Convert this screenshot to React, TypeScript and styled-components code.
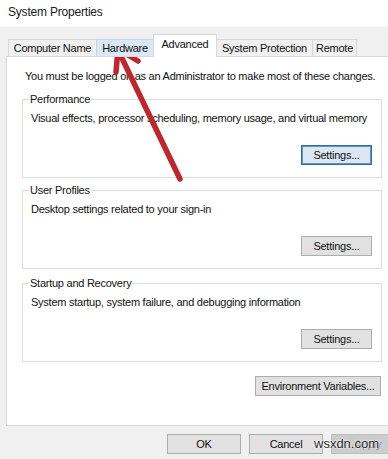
import React from "react";
import styled, {createGlobalStyle} from "styled-components";

const GlobalStyle = createGlobalStyle`
    html, body {
        margin: 0;
        padding: 0;
        background: #f0f0f0;
    }

    body {
        font-family: "Liberation Sans", Arial, sans-serif;
        color: #111;
    }
`;

type TabKind = "normal" | "hover" | "active";

const tabs: { label: string; width: number; kind: TabKind }[] = [
    {label: "Computer Name", width: 89, kind: "normal"},
    {label: "Hardware", width: 58, kind: "hover"},
    {label: "Advanced", width: 64, kind: "active"},
    {label: "System Protection", width: 97, kind: "normal"},
    {label: "Remote", width: 45, kind: "normal"},
];

const groups = [
    {title: "Performance", text: "Visual effects, processor scheduling, memory usage, and virtual memory", top: 9, focused: true},
    {title: "User Profiles", text: "Desktop settings related to your sign-in", top: 5, focused: false},
    {title: "Startup and Recovery", text: "System startup, system failure, and debugging information", top: 7, focused: false},
];

const App: React.FC = () => {
    return (
        <>
            <GlobalStyle/>
            <Window>
                <TitleBar>System Properties</TitleBar>
                <Body>
                    <TabStrip>
                        {tabs.map(t => (
                            <Tab key={t.label} $width={t.width} $kind={t.kind}>{t.label}</Tab>
                        ))}
                    </TabStrip>
                    <Panel>
                        <Notice>You must be logged on as an Administrator to make most of these changes.</Notice>
                        {groups.map(g => (
                            <GroupBox key={g.title} $top={g.top}>
                                <Legend>{g.title}</Legend>
                                <GroupText>{g.text}</GroupText>
                                <ButtonRow>
                                    <Button $width={71} $focused={g.focused}>Settings...</Button>
                                </ButtonRow>
                            </GroupBox>
                        ))}
                        <EnvRow>
                            <Button $width={126}>Environment Variables...</Button>
                        </EnvRow>
                    </Panel>
                    <Footer>
                        <Button $width={74}>OK</Button>
                        <Button $width={74}>Cancel</Button>
                        <Button $width={74} disabled>Apply</Button>
                    </Footer>
                </Body>
                <Watermark>wsxdn.com</Watermark>
                <Arrow viewBox="0 0 388 459" width="388" height="459">
                    <g stroke="#c0262c" strokeWidth="5.5" strokeLinecap="round" strokeLinejoin="round" fill="none">
                        <path d="M180 179 L119 52"/>
                        <path d="M138 61 L118 49 L116 72"/>
                    </g>
                </Arrow>
            </Window>
        </>
    );
};

export default App;

const Window = styled.div`
    position: relative;
    width: 388px;
    height: 459px;
    overflow: hidden;
    background: #f0f0f0;
    display: flex;
    flex-direction: column;
    font-size: 11px;
    letter-spacing: -0.25px;
`;

const TitleBar = styled.div`
    height: 27px;
    flex: none;
    background: #fff;
    padding-left: 8px;
    font-size: 12px;
    line-height: 24px;
    letter-spacing: -0.2px;
    color: #1a1a1a;
`;

const Body = styled.div`
    display: flex;
    flex-direction: column;
    padding: 7px 0 0 6px;
`;

const TabStrip = styled.div`
    display: flex;
    align-items: flex-end;
    padding-left: 2px;
    margin-bottom: -1px;
    position: relative;
    z-index: 1;
`;

const Tab = styled.div<{ $width: number; $kind: TabKind }>`
    box-sizing: border-box;
    width: ${p => p.$width}px;
    height: ${p => (p.$kind === "active" ? 23 : 18)}px;
    margin-right: -1px;
    border: 1px solid ${p => (p.$kind === "hover" ? "#c3d6ea" : "#d9d9d9")};
    border-bottom: ${p => (p.$kind === "active" ? "none" : "1px solid #d9d9d9")};
    background: ${p => (p.$kind === "active" ? "#fff" : p.$kind === "hover" ? "#dae7f4" : "#f0f0f0")};
    text-align: center;
    line-height: ${p => (p.$kind === "active" ? 19 : 16)}px;
    white-space: nowrap;
    position: relative;
    z-index: ${p => (p.$kind === "active" ? 2 : 1)};
`;

const Panel = styled.div`
    box-sizing: border-box;
    width: 400px;
    height: 370px;
    background: #fff;
    border: 1px solid #d9d9d9;
    padding-left: 15px;
    display: flex;
    flex-direction: column;
`;

const Notice = styled.div`
    margin-top: 12px;
    padding-left: 3px;
    line-height: 14px;
    white-space: nowrap;
`;

const GroupBox = styled.fieldset<{ $top: number }>`
    box-sizing: border-box;
    width: 360px;
    min-width: 0;
    margin: ${p => p.$top}px 0 0 0;
    padding: 0 9px 12px 6px;
    border: 1px solid #dcdcdc;
`;

const Legend = styled.legend`
    padding: 0 1px;
    line-height: 14px;
`;

const GroupText = styled.div`
    margin-top: 5px;
    padding-left: 2px;
    line-height: 14px;
    white-space: nowrap;
`;

const ButtonRow = styled.div`
    display: flex;
    justify-content: flex-end;
    margin-top: 20px;
`;

const EnvRow = styled.div`
    width: 360px;
    display: flex;
    justify-content: flex-end;
    padding-right: 1px;
    box-sizing: border-box;
    margin-top: 14px;
`;

const Button = styled.button<{ $width: number; $focused?: boolean }>`
    box-sizing: border-box;
    flex: none;
    width: ${p => p.$width}px;
    height: 20px;
    padding: 0;
    font-family: inherit;
    font-size: 11px;
    letter-spacing: -0.25px;
    color: #111;
    background: ${p => (p.$focused ? "#dce7f1" : "#e1e1e1")};
    border: 1px solid ${p => (p.$focused ? "#2f6fa6" : "#adadad")};
    box-shadow: ${p => (p.$focused ? "inset 0 0 0 1px #5f93c4" : "none")};
    border-radius: 0;

    &:disabled {
        background: #cccccc;
        border-color: #bfbfbf;
        color: #8a8a8a;
    }
`;

const Footer = styled.div`
    display: flex;
    gap: 8px;
    margin-top: 8px;
    padding-left: 161px;
`;

const Watermark = styled.div`
    position: absolute;
    left: 314px;
    top: 436px;
    font-size: 13px;
    letter-spacing: 0;
    color: #2a2a2a;
    text-shadow: 0 0 2px #fff, 0 0 2px #fff;
`;

const Arrow = styled.svg`
    position: absolute;
    left: 0;
    top: 0;
    pointer-events: none;
`;
